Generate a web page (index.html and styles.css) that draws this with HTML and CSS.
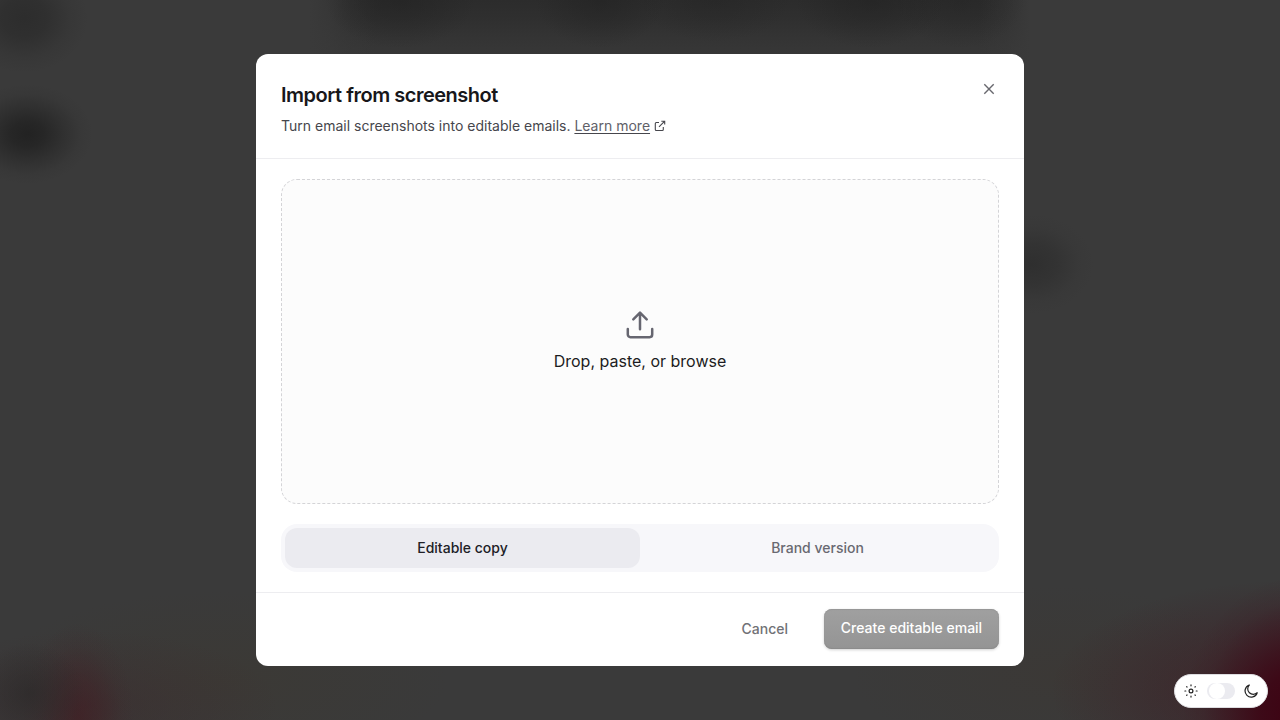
FILE: index.html
```html
<!DOCTYPE html>
<html lang="en">
<head>
<meta charset="utf-8">
<title>Import from screenshot</title>
<link rel="stylesheet" href="styles.css">
</head>
<body>
<div class="backdrop">
  <section class="modal" role="dialog" aria-labelledby="dialog-title">
    <header class="modal-header">
      <div>
        <h1 class="title" id="dialog-title">Import from screenshot</h1>
        <p class="subtitle">Turn email screenshots into editable emails. <a class="link" href="#">Learn more</a><svg class="external" viewBox="0 0 12 12" aria-hidden="true"><path d="M5 2.500H2.300a1 1 0 0 0-1 1v6a1 1 0 0 0 1 1h6a1 1 0 0 0 1-1V7M7.300 1.200h3.400v3.400M10.700 1.200 5 6.900"/></svg></p>
      </div>
      <button class="close" aria-label="Close"><svg width="12" height="12" viewBox="0 0 12 12"><path d="M1.300 1.300 10.700 10.700M10.700 1.300 1.300 10.700"/></svg></button>
    </header>
    <div class="modal-body">
      <div class="dropzone">
        <svg class="upload" viewBox="0 0 32 32" aria-hidden="true"><path d="M3.800 20v5.600a2.600 2.600 0 0 0 2.600 2.600h19.200a2.600 2.600 0 0 0 2.600-2.600V20M16 20.200V4.300M9.300 10.300 16 3.600l6.700 6.700"/></svg>
        <span class="drop-label">Drop, paste, or browse</span>
      </div>
      <div class="segmented">
        <button class="segment segment-active">Editable copy</button>
        <button class="segment">Brand version</button>
      </div>
    </div>
    <footer class="modal-footer">
      <button class="cancel">Cancel</button>
      <button class="create">Create editable email</button>
    </footer>
  </section>
  <div class="theme">
    <svg class="theme-icon" viewBox="0 0 14 14" aria-hidden="true"><circle cx="7" cy="7" r="1.900"/><path d="M7 .9v.9M7 12.200v.9M.9 7h.9M12.200 7h.9M2.700 2.700l.3.3M11 11l.3.3M2.700 11.300l.3-.3M11 3l.3-.3"/></svg>
    <span class="toggle"><span class="knob"></span></span>
    <svg class="theme-icon" viewBox="0 0 14 14" aria-hidden="true"><path d="M5.300 1A6.200 6.200 0 1 0 13.200 8.700 5.500 5.500 0 0 1 5.300 1Z"/></svg>
  </div>
</div>
</body>
</html>
```
FILE: styles.css
```css
* { box-sizing: border-box; }

body {
  margin: 0;
  font-family: Inter, "Liberation Sans", sans-serif;
  color: #1c1c22;
}

button {
  margin: 0;
  padding: 0;
  border: 0;
  background: none;
  font: inherit;
  color: inherit;
}

.backdrop {
  height: 100vh;
  display: flex;
  align-items: center;
  justify-content: center;
  overflow: hidden;
  background:
    radial-gradient(ellipse 66px 50px at 27px 134px, #202020e8 0, #202020c0 25%, #20202060 55%, #20202018 80%, #20202000 100%),
    radial-gradient(ellipse 64px 55px at 24px 18px, #252525a0 0, #25252580 35%, #25252525 72%, #25252500 100%),
    radial-gradient(ellipse 62px 50px at 1032px 264px, #2a2a2ab0 0, #2a2a2a70 40%, #2a2a2a18 75%, #2a2a2a00 100%),
    radial-gradient(ellipse 75px 48px at 400px 0, #20202080, #20202050 40%, #20202000),
    radial-gradient(ellipse 65px 48px at 600px 0, #20202080, #20202050 40%, #20202000),
    radial-gradient(ellipse 75px 42px at 715px 0, #22222260, #22222200),
    radial-gradient(ellipse 75px 48px at 870px 0, #20202080, #20202050 40%, #20202000),
    radial-gradient(ellipse 65px 48px at 960px 0, #22222260, #22222200),
    linear-gradient(90deg, #3a3a3a 310px, #3a3a3ac0 330px, #3a3a3a50 350px, #3a3a3a00 375px, #3a3a3a00 980px, #3a3a3a70 1005px, #3a3a3a 1030px) 0 0 / 100% 70px no-repeat,
    linear-gradient(#2c2c2c, #2f2f2f 18px, #343434 38px, #3a3a3a 70px) 0 0 / 100% 70px no-repeat,
    radial-gradient(ellipse 55px 50px at 30px 693px, #2b2929b0, #2b292900),
    radial-gradient(ellipse 56px 95px at 78px 717px, #421b21a0 0, #421b2160 40%, #421b2118 75%, #421b2100 100%),
    radial-gradient(ellipse 190px 75px at 90px 705px, #3c252960, #3c252900),
    radial-gradient(ellipse 120px 145px at 1302px 720px, #3d0011 0, #3d0011c0 35%, #3d001160 60%, #3d001118 82%, #3d001100 100%),
    radial-gradient(ellipse 240px 110px at 1290px 690px, #3f1720b0, #3f172048 60%, #3f172000),
    radial-gradient(ellipse 210px 90px at 1060px 675px, #3d362f60, #3d362f00),
    radial-gradient(ellipse 230px 90px at 220px 680px, #3d382f70, #3d382f00),
    #3a3a3a;
}

.modal {
  width: 768px;
  height: 612px;
  display: flex;
  flex-direction: column;
  border-radius: 12px;
  background: #fff;
}

.modal-header {
  height: 105px;
  display: flex;
  justify-content: space-between;
  padding: 25px;
  border-bottom: 1px solid #ededf0;
}

.title {
  margin: 0;
  font-size: 20px;
  line-height: 32px;
  font-weight: 600;
  letter-spacing: -.49px;
  color: #17171a;
}

.subtitle {
  display: flex;
  align-items: center;
  margin: 5px 0 0;
  font-size: 14px;
  line-height: 20px;
  color: #46464c;
  white-space: pre;
}

.link {
  color: #606068;
  text-decoration: underline;
  text-decoration-color: #46464c;
  text-decoration-thickness: 1px;
  text-underline-offset: 2px;
}

.external {
  width: 12px;
  height: 12px;
  margin-left: 4px;
  fill: none;
  stroke: #46464c;
  stroke-width: 1.1;
}

.close {
  width: 20px;
  height: 20px;
  display: grid;
  place-items: center;
}

.close svg {
  fill: none;
  stroke: #68686e;
  stroke-width: 1.4;
}

.modal-body {
  flex: 1;
  display: flex;
  flex-direction: column;
  gap: 20px;
  padding: 20px 25px;
}

.dropzone {
  flex: 1;
  display: flex;
  flex-direction: column;
  align-items: center;
  justify-content: center;
  gap: 8px;
  padding-bottom: 2px;
  border: 1px dashed #d4d4d7;
  border-radius: 16px;
  background: #fcfcfc;
}

.upload {
  width: 32px;
  height: 32px;
  fill: none;
  stroke: #666670;
  stroke-width: 2.5;
  stroke-linecap: round;
  stroke-linejoin: round;
}

.drop-label {
  font-size: 16px;
  line-height: 24px;
}

.segmented {
  height: 48px;
  display: flex;
  padding: 4px;
  border-radius: 16px;
  background: #f7f7fa;
}

.segment {
  flex: 1;
  padding-bottom: 2px;
  border-radius: 12px;
  font-size: 14px;
  font-weight: 500;
  color: #696971;
}

.segment-active {
  background: #ebebf0;
  color: #202026;
}

.modal-footer {
  height: 74px;
  display: flex;
  align-items: center;
  justify-content: flex-end;
  gap: 20px;
  padding: 0 25px 2px;
  border-top: 1px solid #ededf0;
  font-size: 14px;
  font-weight: 500;
  letter-spacing: .1px;
}

.cancel {
  height: 40px;
  padding: 0 16px;
  color: #717176;
}

.create {
  width: 175px;
  height: 40px;
  padding-bottom: 2px;
  border-radius: 8px;
  background: linear-gradient(#a0a0a0, #949494);
  box-shadow: 0 1px 3px #00000030, inset 0 1px 1px #969696, inset 0 -1px 1px #8b8b8b;
  color: #fff;
}

.theme {
  position: absolute;
  right: 12px;
  bottom: 12px;
  width: 94px;
  height: 34px;
  display: flex;
  align-items: center;
  justify-content: space-between;
  padding: 0 9px;
  border: 1px solid #dddde0;
  border-radius: 17px;
  background: #fff;
}

.theme-icon {
  width: 14px;
  height: 14px;
  fill: none;
  stroke: #222;
  stroke-width: 1.2;
  stroke-linecap: round;
  stroke-linejoin: round;
}

.toggle {
  width: 28px;
  height: 16px;
  border-radius: 8px;
  background: #ebebf0;
}

.knob {
  display: block;
  width: 16px;
  height: 16px;
  margin-left: 2px;
  border-radius: 50%;
  background: #fff;
}
```
